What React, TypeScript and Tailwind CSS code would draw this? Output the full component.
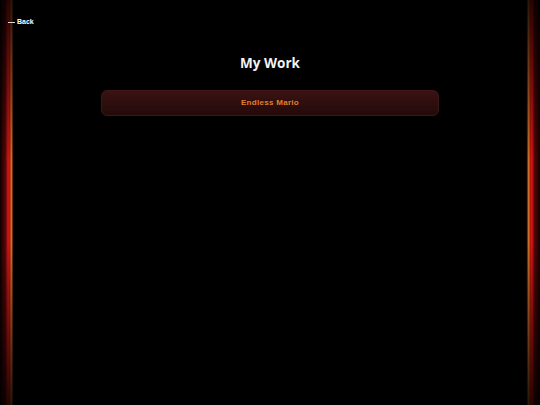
import React from 'react';

const EdgeGlow = ({ side }: { side: 'left' | 'right' }) => {
  const grad =
    side === 'left'
      ? 'bg-[linear-gradient(to_right,#0a0000_0px,#2a0303_2px,#5a0808_6px,#b81010_7px,#d01818_9px,#a01008_10px,#e0802a_11px,#b06020_12px,#200500_13px,transparent_14px)]'
      : 'bg-[linear-gradient(to_left,#0a0000_0px,#2a0303_2px,#5a0808_6px,#b81010_7px,#d01818_9px,#a01008_10px,#e0802a_11px,#b06020_12px,#200500_13px,transparent_14px)]';
  return (
    <div
      className={`w-[14px] shrink-0 ${grad} [mask-image:linear-gradient(to_bottom,rgba(0,0,0,0.2)_0%,rgba(0,0,0,0.6)_20%,#000_40%,#000_60%,rgba(0,0,0,0.6)_80%,rgba(0,0,0,0.2)_100%)]`}
    />
  );
};

const projects = [{ name: 'Endless Mario' }];

export default function App() {
  return (
    <div className="relative flex h-[405px] w-[540px] bg-black overflow-hidden">
      <EdgeGlow side="left" />
      <main className="flex-1 flex flex-col items-center">
        <h1 className="mt-[54px] text-[13.5px] leading-[18px] font-bold text-[#f2f2f2] font-['Open_Sans',sans-serif]">
          My Work
        </h1>
        <div className="mt-[18px] w-[338px] flex flex-col gap-2">
          {projects.map((p) => (
            <div
              key={p.name}
              className="h-[26px] rounded-[6px] border border-[#3d1616] bg-[linear-gradient(to_bottom,#3a1212,#240a0a)] flex items-center justify-center"
            >
              <span className="text-[8px] font-bold text-[#e0802a] font-['Liberation_Sans',sans-serif] tracking-[0.3px]">
                {p.name}
              </span>
            </div>
          ))}
        </div>
      </main>
      <EdgeGlow side="right" />
      <a
        href="#"
        className="absolute left-[8px] top-[17px] flex items-center gap-[2px] text-[7px] leading-[10px] font-bold text-white font-['Liberation_Sans',sans-serif]"
      >
        <span className="block w-[7px] h-px bg-[#d8d8d8]" />
        <span>Back</span>
      </a>
    </div>
  );
}
